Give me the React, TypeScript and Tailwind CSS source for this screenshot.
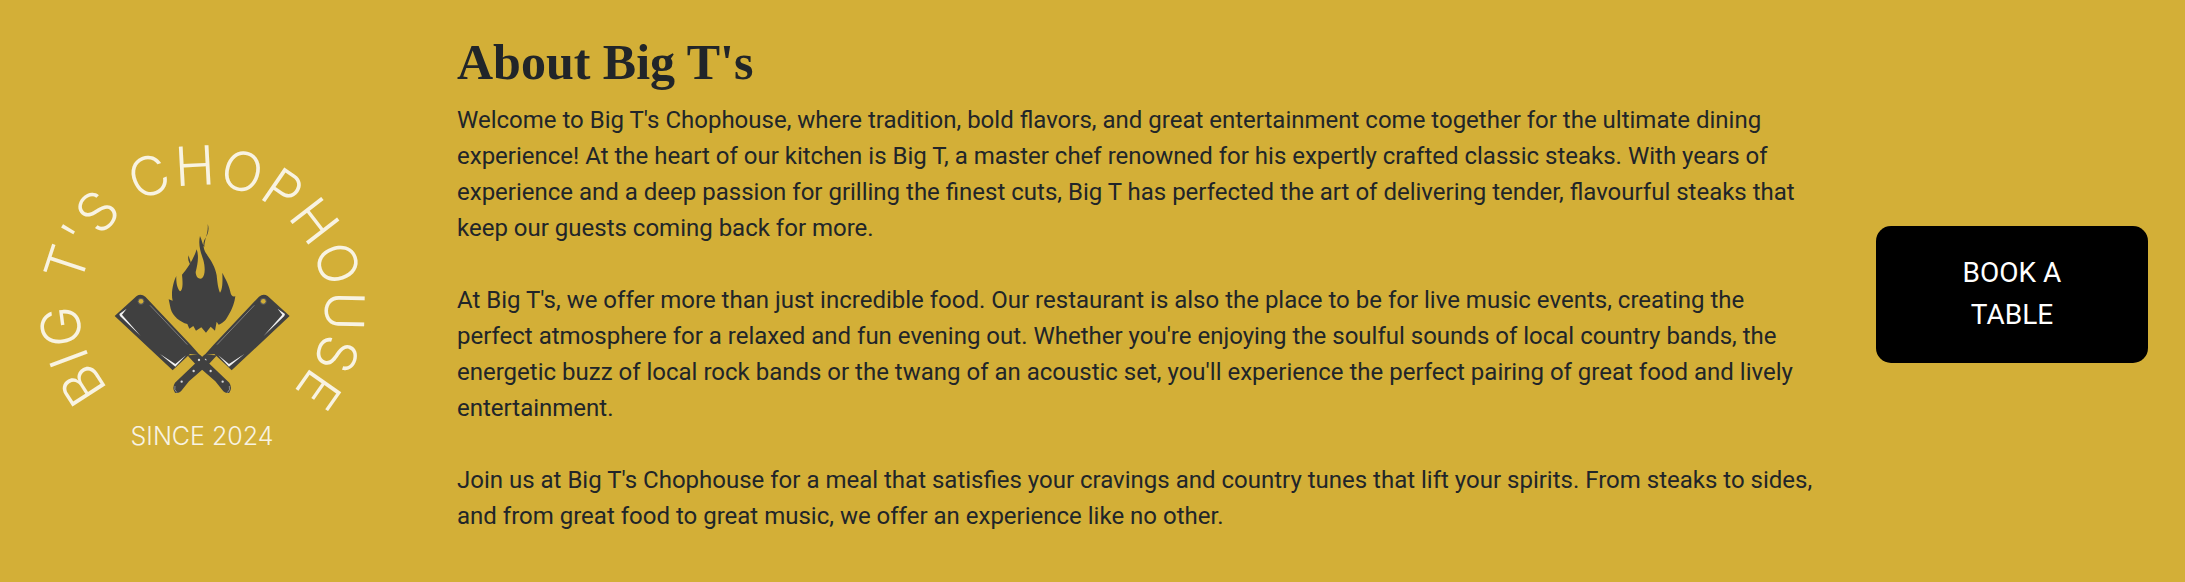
import React from "react";

const cream = "#f8f3e2";
const steel = "#404040";

const Cleaver = ({ mirrored = false }: { mirrored?: boolean }) => (
  <g transform={mirrored ? "translate(613 0) scale(-1 1)" : undefined}>
    {/* handle */}
    <path
      fill={steel}
      d="M262 436 L300 434 L388 518 Q398 534 388 548 Q378 552 370 544 L346 514 L284 460 Z"
    />
    <path fill="none" stroke="#d9d9d9" strokeWidth="1.5" d="M388 528 Q392 540 382 548" />
    <circle cx="297" cy="450" r="3.5" fill="#d9d9d9" />
    <circle cx="332" cy="483" r="3.5" fill="#d9d9d9" />
    <circle cx="368" cy="515" r="3.5" fill="#d9d9d9" />
    {/* blade */}
    <path
      fill={steel}
      d="M44 318 L110 258 Q123 250 136 260 L272 404 L300 436 L270 432 L218 481 Z"
    />
    <path fill="#f1f1f1" d="M58 312 L80 296 L66 314 L122 378 L60 318 Z" />
    <path fill="none" stroke="#bdbdbd" strokeWidth="1.5" d="M150 286 L262 404" />
    <path fill="#f1f1f1" d="M180 432 L226 462 L258 436 L226 470 Z" />
    <circle cx="123" cy="274" r="10" fill="#5a5a5a" />
    <circle cx="123" cy="274" r="7" fill="#d3af37" />
  </g>
);

const Logo = () => (
  <svg viewBox="0 0 420 582" className="w-[420px] h-[582px] shrink-0">
    <defs>
      <path id="logo-arc" d="M109.2 388.7 A123 123 0 1 1 292 392" />
    </defs>
    <text
      fill={cream}
      fontFamily="Inter, sans-serif"
      fontWeight="300"
      fontSize="54"
    >
      <textPath href="#logo-arc" textLength="565" lengthAdjust="spacing">
        BIG T'S CHOPHOUSE
      </textPath>
    </text>
    <text
      x="202"
      y="445"
      textAnchor="middle"
      fill={cream}
      fontFamily="Inter, sans-serif"
      fontWeight="300"
      fontSize="25"
    >
      SINCE 2024
    </text>
    <g transform="translate(100 210) scale(0.3333)">
      <Cleaver mirrored />
      <Cleaver />
      <path
        fill={steel}
        d="M323 42 C330 60 322 76 313 90 C308 102 310 116 318 130 C334 152 346 172 350 196 C352 216 354 236 360 248 C368 240 368 212 367 188 C376 206 388 226 392 250 C394 258 400 262 406 258 C404 276 398 296 384 318 C376 334 366 340 356 344 L350 335 L345 362 L332 350 L318 368 L304 352 L288 362 L280 348 L268 356 L262 342 C240 336 218 318 212 296 L206 268 L218 272 C212 248 220 216 229 198 C228 218 232 236 240 244 C250 240 248 212 246 194 C262 176 280 150 290 118 C298 140 292 166 287 186 C288 204 298 208 306 205 C316 196 316 172 310 150 C302 126 294 104 300 78 C306 92 308 104 313 112 C312 90 326 70 323 42 Z"
      />
      <path fill={steel} d="M266 136 C262 146 266 156 272 166 C274 152 268 150 266 136 Z" />
    </g>
  </svg>
);

export default function App() {
  return (
    <div className="flex items-start w-full h-[582px] bg-[#d3af37] text-[#212529] font-['Roboto',sans-serif]">
      <Logo />
      <div className="w-[1362px] ml-[37px] pt-[32px] shrink-0">
        <h2 className="mb-[10px] text-[50px] leading-[60px] font-bold font-['Liberation_Serif',serif]">
          About Big T's
        </h2>
        <div className="text-[24px] leading-[36px]">
          <p className="mb-9">
            Welcome to Big T's Chophouse, where tradition, bold flavors, and great entertainment come
            together for the ultimate dining experience! At the heart of our kitchen is Big T, a master
            chef renowned for his expertly crafted classic steaks. With years of experience and a deep
            passion for grilling the finest cuts, Big T has perfected the art of delivering tender,
            flavourful steaks that keep our guests coming back for more.
          </p>
          <p className="mb-9">
            At Big T's, we offer more than just incredible food. Our restaurant is also the place to be
            for live music events, creating the perfect atmosphere for a relaxed and fun evening out.
            Whether you're enjoying the soulful sounds of local country bands, the energetic buzz of
            local rock bands or the twang of an acoustic set, you'll experience the perfect pairing of
            great food and lively entertainment.
          </p>
          <p>
            Join us at Big T's Chophouse for a meal that satisfies your cravings and country tunes that
            lift your spirits. From steaks to sides, and from great food to great music, we offer an
            experience like no other.
          </p>
        </div>
      </div>
      <div className="flex-1 flex justify-center pt-[226px] pr-[37px] pl-[57px]">
        <a className="w-[272px] h-[137px] shrink-0 rounded-[15px] bg-black text-white text-[28px] leading-[42px] text-center flex items-center justify-center px-12 pb-[2px]">
          BOOK A TABLE
        </a>
      </div>
    </div>
  );
}
